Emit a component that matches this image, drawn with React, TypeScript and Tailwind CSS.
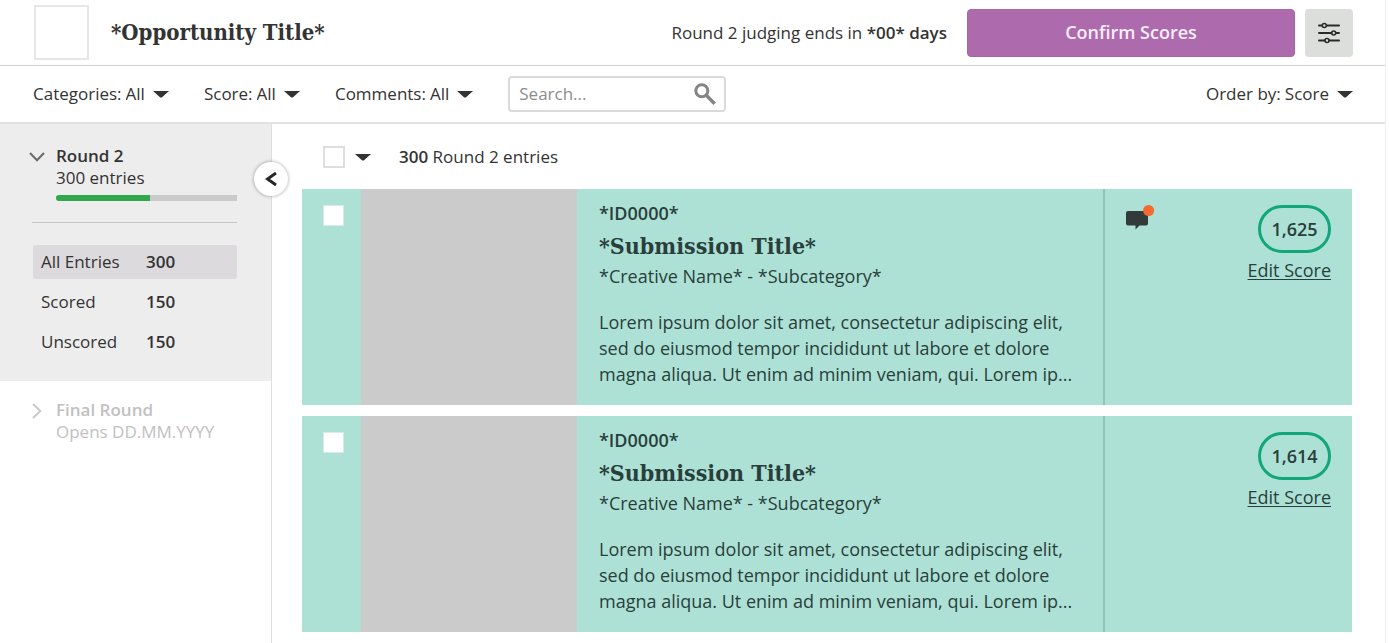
import { ReactNode } from "react";

function Caret() {
  return (
    <svg width="16" height="8" viewBox="0 0 16 8" aria-hidden="true" className="pointer-events-none shrink-0">
      <path d="M0 1h16L9.300 6.900c-0.800 0.700-1.800 0.700-2.600 0Z" fill="#333" />
    </svg>
  );
}

function Dropdown({ id, label, options }: { id: string; label: string; options: string[] }) {
  return (
    <div className="flex items-center gap-1 whitespace-nowrap">
      <label htmlFor={id}>{label}</label>
      <div className="flex items-center">
        <select id={id} className="field-sizing-content cursor-pointer appearance-none bg-transparent pr-6">
          {options.map((o) => (
            <option key={o}>{o}</option>
          ))}
        </select>
        <span className="pointer-events-none -ml-4">
          <Caret />
        </span>
      </div>
    </div>
  );
}

function Header() {
  return (
    <header className="flex h-[66px] items-center border-b border-[#d0d3d3] pr-8 pl-[34px]">
      <div className="size-[55px] border-2 border-[#e6e6e6]" />
      <h1 className="ml-[22px] font-['DejaVu_Serif_Condensed','DejaVu_Serif',serif] text-[22px] font-bold">
        *Opportunity Title*
      </h1>
      <p className="ml-auto text-[17px]">
        Round 2 judging ends in <span className="font-semibold">*00* days</span>
      </p>
      <button className="ml-5 h-12 w-[328px] rounded-[4px] border border-[#a767a5] bg-[#ad6bae] text-[18px] font-semibold text-[#fbeefb]">
        Confirm Scores
      </button>
      <button aria-label="Settings" className="ml-[10px] flex size-12 items-center justify-center rounded-[4px] bg-[#dcdedc]">
        <svg width="22" height="22" viewBox="0 0 22 22" fill="none" stroke="#2b2b2b" strokeWidth="2" strokeLinecap="round">
          <path d="M1 3.500h3M9 3.500h12M1 11h12.500M18 11h3M1 18.500h5.500M11.500 18.500H21" />
          <circle cx="6.300" cy="3.500" r="2" strokeWidth="1.600" />
          <circle cx="15.700" cy="11" r="2" strokeWidth="1.600" />
          <circle cx="9" cy="18.500" r="2" strokeWidth="1.600" />
        </svg>
      </button>
    </header>
  );
}

function FilterBar() {
  return (
    <div className="flex h-[58px] items-center border-b-2 border-[#e2e2e2] pr-8 pl-[33px] text-[17px]">
      <div className="flex items-center gap-[35px]">
        <Dropdown id="categories" label="Categories:" options={["All"]} />
        <Dropdown id="score" label="Score:" options={["All"]} />
        <Dropdown id="comments" label="Comments:" options={["All"]} />
        <label className="flex h-9 w-[218px] items-center rounded-[4px] border-2 border-[#dadada] pr-2 pl-[9px]">
          <input aria-label="Search" placeholder="Search..." className="w-0 flex-1 bg-transparent outline-none placeholder:text-[#8c8c8c]" />
          <svg width="22" height="22" viewBox="0 0 22 22" fill="none" stroke="#858585" aria-hidden="true">
            <circle cx="7.800" cy="7.800" r="6" strokeWidth="3" />
            <path d="M12.500 12.500 20.700 20.700" strokeWidth="3.400" />
          </svg>
        </label>
      </div>
      <div className="ml-auto">
        <Dropdown id="order" label="Order by:" options={["Score"]} />
      </div>
    </div>
  );
}

const filters = [
  { name: "All Entries", count: 300, active: true },
  { name: "Scored", count: 150, active: false },
  { name: "Unscored", count: 150, active: false },
];

function Sidebar() {
  return (
    <aside className="relative w-[272px] shrink-0 border-r border-[#dedede] text-[17px]">
      <section className="bg-[#eeedee] pt-[21px] pr-[34px] pb-[22px] pl-8">
        <div className="flex">
          <svg width="16" height="10" viewBox="0 0 16 10" fill="none" stroke="#6b6b6b" strokeWidth="2" className="mt-[7px] -ml-[3px] shrink-0">
            <path d="M1 1l7 7.300L15 1" />
          </svg>
          <div className="ml-[11px] flex-1">
            <h2 className="leading-[22px] font-semibold">Round 2</h2>
            <p className="leading-[22px]">300 entries</p>
            <div className="mt-[6px] h-[6px] overflow-hidden rounded-l-full bg-[#cacaca]">
              <div className="h-full w-[52%] bg-[#31a84c]" />
            </div>
          </div>
        </div>
        <hr className="mt-[21px] border-[#c6c6c6]" />
        <ul className="mt-[22px] ml-px flex flex-col gap-[6px]">
          {filters.map((f) => (
            <li key={f.name}>
              <button
                className={
                  f.active
                    ? "flex h-[34px] w-full items-center rounded-[2px] bg-[#dcdadc] pl-2 text-left"
                    : "flex h-[34px] w-full items-center rounded-[2px] pl-2 text-left"
                }
              >
                <span className="w-[105px]">{f.name}</span>
                <span className="font-semibold">{f.count}</span>
              </button>
            </li>
          ))}
        </ul>
      </section>
      <section className="flex pt-[18px] pl-8 text-[#c2c0c2]">
        <svg width="10" height="16" viewBox="0 0 10 16" fill="none" stroke="#c9c7c9" strokeWidth="2" className="mt-1 shrink-0">
          <path d="M1 1l7.300 7L1 15" />
        </svg>
        <div className="ml-[14px]">
          <h2 className="leading-[22px] font-semibold">Final Round</h2>
          <p className="leading-[22px]">Opens DD.MM.YYYY</p>
        </div>
      </section>
      <button
        aria-label="Collapse sidebar"
        className="absolute top-[38px] -right-[17px] flex size-[34px] items-center justify-center rounded-full bg-white shadow-[0_0_3px_1px_rgba(0,0,0,0.22)]"
      >
        <svg width="12" height="14" viewBox="0 0 12 14" fill="none" stroke="#262626" strokeWidth="3">
          <path d="M11 1 2.500 7 11 13" />
        </svg>
      </button>
    </aside>
  );
}

function Check({ label, className }: { label: string; className: string }) {
  return <input type="checkbox" aria-label={label} className={className} />;
}

function CommentIcon() {
  return (
    <svg width="30" height="26" viewBox="0 0 30 26" role="img" aria-label="New comments">
      <path d="M3 6h18a2 2 0 0 1 2 2v10.500a2 2 0 0 1-2 2H14.500L10.500 24.500v-4H3a2 2 0 0 1-2-2V8a2 2 0 0 1 2-2Z" fill="#333b3a" />
      <circle cx="23.600" cy="5.500" r="5.500" fill="#f4692f" />
    </svg>
  );
}

function Entry({ score, icon }: { score: string; icon?: ReactNode }) {
  return (
    <article className="flex bg-[#aee1d5] text-[18px] text-[#283f3b]">
      <div className="w-[59px] pt-4 pl-[21px]">
        <Check label="Select entry" className="block size-[21px] appearance-none border border-[#d5ece6] bg-white" />
      </div>
      <div className="w-[216px] shrink-0 self-stretch bg-[#cbcbcb]" />
      <div className="min-w-0 flex-1 pt-3 pr-5 pb-[18px] pl-[22px]">
        <p className="leading-6 font-semibold">*ID0000*</p>
        <h3 className="mt-[3px] font-['DejaVu_Serif_Condensed','DejaVu_Serif',serif] text-[23px] leading-9 font-bold">
          *Submission Title*
        </h3>
        <p className="leading-6">*Creative Name* - *Subcategory*</p>
        <p className="mt-[21px] leading-[26px]">
          Lorem ipsum dolor sit amet, consectetur adipiscing elit, sed do eiusmod tempor incididunt ut labore et dolore
          magna aliqua. Ut enim ad minim veniam, qui. Lorem ip...
        </p>
      </div>
      <div className="flex w-[249px] shrink-0 items-start justify-between border-l-2 border-[#93c4b8] pt-4 pr-[21px] pl-5">
        <div>{icon}</div>
        <div className="flex flex-col items-end">
          <span className="flex h-12 w-[73px] items-center justify-center rounded-full border-3 border-[#12a67c] font-semibold">
            {score}
          </span>
          <a href="#" className="mt-[5px] leading-6 underline decoration-1 underline-offset-2">
            Edit Score
          </a>
        </div>
      </div>
    </article>
  );
}

export default function App() {
  return (
    <div className="mr-[3px] flex min-h-screen flex-col border-r border-[#f0f0f4] bg-white font-['Open_Sans',sans-serif] text-[#333]">
      <Header />
      <FilterBar />
      <div className="flex flex-1">
        <Sidebar />
        <main className="flex-1 pr-[33px] pl-[30px]">
          <div className="flex h-[65px] items-center pl-[21px] text-[17px]">
            <Check label="Select all" className="block size-[22px] appearance-none border-2 border-[#dedede] bg-white" />
            <button aria-label="Selection options" className="ml-[10px]">
              <Caret />
            </button>
            <p className="ml-7">
              <span className="font-semibold">300</span> Round 2 entries
            </p>
          </div>
          <div className="flex flex-col gap-[11px]">
            <Entry score="1,625" icon={<CommentIcon />} />
            <Entry score="1,614" />
          </div>
        </main>
      </div>
    </div>
  );
}
